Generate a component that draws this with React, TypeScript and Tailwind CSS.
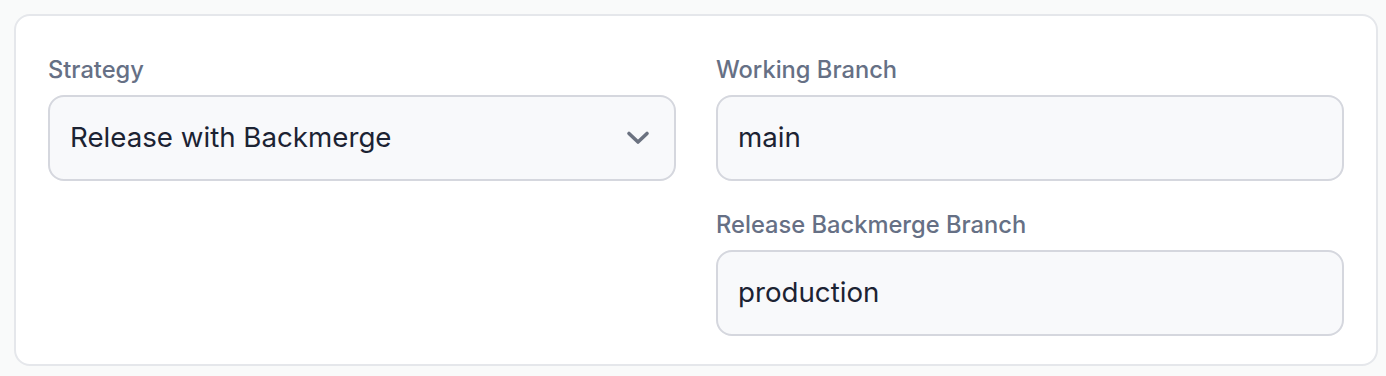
import React from "react";

function Chevron() {
  return (
    <svg width="24" height="16" viewBox="0 0 24 16" fill="none" className="shrink-0">
      <path d="M3 3.5 L12 12 L21 3.5" stroke="#6b7280" strokeWidth="3.6" strokeLinecap="round" strokeLinejoin="round" />
    </svg>
  );
}

function Label({ children }: { children: React.ReactNode }) {
  return (
    <div className="text-[23.7px] leading-[28px] font-medium text-[#667085] mb-[11px]">{children}</div>
  );
}

function Field({ label, value, select }: { label: string; value: string; select?: boolean }) {
  return (
    <div className="flex flex-col">
      <Label>{label}</Label>
      <div className="h-[86px] rounded-[16px] border-2 border-[#d5d7de] bg-[#f8f9fb] flex items-center pl-[20px] pr-[24px]">
        <span className="flex-1 text-[27.7px] text-[#1c2333]">{value}</span>
        {select && <Chevron />}
      </div>
    </div>
  );
}

export default function App() {
  return (
    <div className="w-[1386px] h-[376px] bg-[#f9fafa] pt-[14px] pl-[14px]" style={{ fontFamily: "Inter, 'Noto Sans', sans-serif" }}>
      <div className="w-[1364px] h-[352px] bg-white border-2 border-[#e5e7eb] rounded-[16px] pt-[40px] px-[32px]">
        <div className="grid grid-cols-2 gap-x-[40px]">
          <div>
            <Field label="Strategy" value="Release with Backmerge" select />
          </div>
          <div className="flex flex-col gap-[30px]">
            <Field label="Working Branch" value="main" />
            <Field label="Release Backmerge Branch" value="production" />
          </div>
        </div>
      </div>
    </div>
  );
}
